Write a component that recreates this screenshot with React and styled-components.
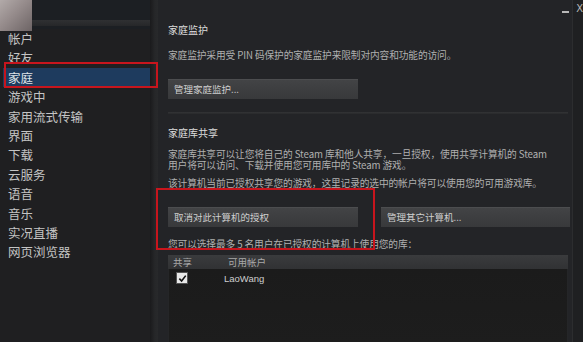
import React from 'react'
import styled, { createGlobalStyle } from 'styled-components'

const GlobalStyle = createGlobalStyle`
  html, body {
    margin: 0;
    padding: 0;
    background: #1f2022;
  }
  body {
    font-family: "Noto Sans CJK SC", "Liberation Sans", sans-serif;
  }
`;

// --- Window frame ---
const Window = styled.div`
  position: relative;
  display: flex;
  width: 583px;
  height: 342px;
  overflow: hidden;
  background: #232427;
`;

const Sidebar = styled.div`
  display: flex;
  flex-direction: column;
  width: 150px;
  flex-shrink: 0;
  background: #1f1f21;
`;

const SidebarTop = styled.div`
  display: flex;
  height: 29px;
  flex-shrink: 0;
`;

const Avatar = styled.div`
  width: 32px;
  height: 31px;
  background: linear-gradient(135deg, #b2aaa9 0%, #958b8b 45%, #6d6465 100%);
  filter: blur(0.6px);
`;

const TopBand = styled.div`
  flex: 1;
  display: flex;
  flex-direction: column;
  background: #1c1f23;

  &::after {
    content: '';
    margin-top: 20px;
    height: 6px;
    background: linear-gradient(#2f3032, #262729);
  }
`;

const NavList = styled.ul`
  list-style: none;
  margin: 0;
  padding: 0 0 0 3px;
`;

const NavItem = styled.li`
  height: 19.4px;
  line-height: 19.4px;
  padding-left: 5px;
  margin-right: ${({ $active }) => ($active ? '-4px' : '0')};
  font-size: 12.5px;
  color: ${({ $active }) => ($active ? '#dfe3e8' : '#c4c4c4')};
  background: ${({ $active }) => ($active ? '#1e3b5e' : 'transparent')};
  white-space: nowrap;
`;

const Gutter = styled.div`
  width: 8px;
  flex-shrink: 0;
  background: linear-gradient(90deg, #1a1a1c 0%, #262729 60%, #28292b 100%);
`;

const Content = styled.div`
  flex: 1;
  padding: 23px 2px 0 10px;
  color: #b0b0b0;
  font-size: 9.7px;
`;

const ScrollStrip = styled.div`
  width: 11px;
  flex-shrink: 0;
  background: #1f2022;
  border-left: 1px solid #2c2d2f;
`;

// --- Content pieces ---
const Heading = styled.div`
  font-size: 10px;
  line-height: 14px;
  color: #dcdcdc;
  margin-top: ${({ $top }) => $top || 0}px;
  margin-bottom: ${({ $gap }) => $gap || 8}px;
`;

const Para = styled.p`
  margin: ${({ $top }) => $top || 0}px 0 ${({ $gap }) => $gap || 0}px;
  line-height: 11px;
  white-space: nowrap;
  letter-spacing: -0.1px;
`;

const Button = styled.div`
  width: ${({ $w }) => $w || 190}px;
  height: 20px;
  line-height: 20px;
  box-sizing: border-box;
  padding-left: 6px;
  font-size: 9.5px;
  color: #cfcfcf;
  background: linear-gradient(#434446, #38393b);
  box-shadow: inset 0 1px 0 rgba(255, 255, 255, 0.05);
`;

const ButtonRow = styled.div`
  display: flex;
  gap: 23px;
  margin-top: ${({ $top }) => $top || 0}px;
`;

const Divider = styled.div`
  height: 2px;
  margin: 13px 2px 0 0;
  background: linear-gradient(#333436, #28292b);
`;

const Table = styled.div`
  display: flex;
  flex-direction: column;
  height: 90px;
  margin-right: 2px;
`;

const TableHead = styled.div`
  display: flex;
  height: 14px;
  line-height: 14px;
  background: linear-gradient(#3a3b3d, #313234);
  color: #a9a9a9;
  font-size: 9.5px;
`;

const Cell = styled.div`
  width: ${({ $w }) => $w}px;
  padding-left: ${({ $pl }) => $pl || 0}px;
`;

const TableBody = styled.div`
  flex: 1;
  background: linear-gradient(#1b1b1b, #1d1d1d);
  border: 1px solid #252628;
  border-top: none;
`;

const Row = styled.div`
  display: flex;
  align-items: center;
  height: 18px;
`;

const Check = styled.div`
  width: 10px;
  height: 10px;
  margin-left: 7px;
  margin-right: 36px;
  background: #e8e8e8;
  border: 1px solid #555;
  display: flex;
  align-items: center;
  justify-content: center;
`;

const UserName = styled.span`
  font-family: "Liberation Sans", sans-serif;
  font-size: 9.5px;
  color: #cfcfcf;
`;

// --- Overlays ---
const WindowControls = styled.div`
  position: absolute;
  top: 3px;
  right: 0;
  display: flex;
  align-items: center;
  gap: 7px;
  font-family: "DejaVu Sans", sans-serif;
  font-size: 10px;
  color: #b8b8b8;
`;

const Minimize = styled.span`
  width: 7px;
  height: 2px;
  margin-top: 6px;
  background: #b8b8b8;
`;

const RedBox = styled.div`
  position: absolute;
  box-sizing: border-box;
  border: 2.5px solid #c7151d;
  left: ${({ $x }) => $x}px;
  top: ${({ $y }) => $y}px;
  width: ${({ $w }) => $w}px;
  height: ${({ $h }) => $h}px;
`;

const navItems = ['帐户', '好友', '家庭', '游戏中', '家用流式传输', '界面', '下载', '云服务', '语音', '音乐', '实况直播', '网页浏览器'];

export default function App() {
  return (
    <>
      <GlobalStyle />
      <Window>
        <Sidebar>
          <SidebarTop>
            <Avatar />
            <TopBand />
          </SidebarTop>
          <NavList>
            {navItems.map((item) => (
              <NavItem key={item} $active={item === '家庭'}>{item}</NavItem>
            ))}
          </NavList>
        </Sidebar>
        <Gutter />
        <Content>
          <Heading $gap={13}>家庭监护</Heading>
          <Para>家庭监护采用受 PIN 码保护的家庭监护来限制对内容和功能的访问。</Para>
          <ButtonRow $top={18}>
            <Button>管理家庭监护...</Button>
          </ButtonRow>
          <Divider />
          <Heading $top={12} $gap={9}>家庭库共享</Heading>
          <Para $gap={7}>
            家庭库共享可以让您将自己的 Steam 库和他人共享，一旦授权，使用共享计算机的 Steam<br />
            用户将可以访问、下载并使用您可用库中的 Steam 游戏。
          </Para>
          <Para>该计算机当前已授权共享您的游戏，这里记录的选中的帐户将可以使用您的可用游戏库。</Para>
          <ButtonRow $top={18}>
            <Button>取消对此计算机的授权</Button>
            <Button $w={189}>管理其它计算机...</Button>
          </ButtonRow>
          <Para $top={12} $gap={5}>您可以选择最多 5 名用户在已授权的计算机上使用您的库：</Para>
          <Table>
            <TableHead>
              <Cell $w={55} $pl={5}>共享</Cell>
              <Cell $w={200}>可用帐户</Cell>
            </TableHead>
            <TableBody>
              <Row>
                <Check>
                  <svg width="9" height="9" viewBox="0 0 10 10">
                    <path d="M1.5 5.2 L4 7.8 L8.6 1.8" fill="none" stroke="#111" strokeWidth="1.8" />
                  </svg>
                </Check>
                <UserName>LaoWang</UserName>
              </Row>
            </TableBody>
          </Table>
        </Content>
        <ScrollStrip />
        <WindowControls>
          <Minimize />
          <span>X</span>
        </WindowControls>
        <RedBox $x={4} $y={62} $w={154} $h={26} />
        <RedBox $x={156} $y={188} $w={219} $h={62} />
      </Window>
    </>
  );
}
